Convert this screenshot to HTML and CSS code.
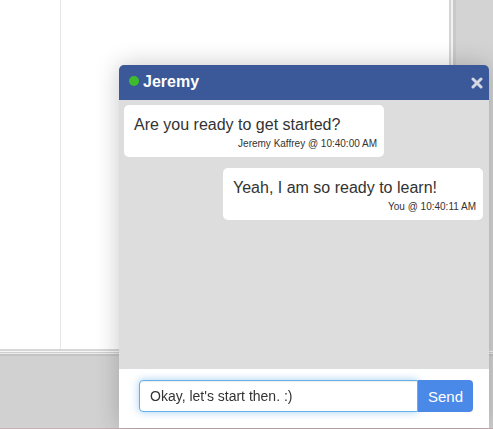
FILE: index.html
```html
<!DOCTYPE html>
<html>
<head>
<meta charset="utf-8">
<link rel="stylesheet" href="styles.css">
</head>
<body>
<div class="desk">
  <div class="top">
    <div class="side"></div>
    <div class="main"></div>
    <div class="vsep"></div>
    <div class="rail"></div>
  </div>
  <div class="hsep"></div>
  <div class="tray"></div>
</div>
<div class="chat">
  <div class="chat-head">
    <span class="dot"></span>
    <span class="name">Jeremy</span>
    <svg class="close" width="12" height="12" viewBox="0 0 12 12"><path d="M2 2 L10 10 M10 2 L2 10" stroke="#d3d8e3" stroke-width="3" stroke-linecap="round"/></svg>
  </div>
  <div class="chat-body">
    <div class="msg them">
      <div class="text">Are you ready to get started?</div>
      <div class="meta">Jeremy Kaffrey @ 10:40:00 AM</div>
    </div>
    <div class="msg me">
      <div class="text">Yeah, I am so ready to learn!</div>
      <div class="meta">You @ 10:40:11 AM</div>
    </div>
  </div>
  <div class="chat-foot">
    <div class="input-group">
      <input class="field" type="text" value="Okay, let's start then. :)">
      <button class="send">Send</button>
    </div>
  </div>
</div>
</body>
</html>
```
FILE: styles.css
```css
html, body {
  margin: 0;
  padding: 0;
  height: 429px;
  overflow: hidden;
  font-family: "Liberation Sans", Arial, Helvetica, sans-serif;
}
.desk {
  height: 429px;
  display: flex;
  flex-direction: column;
  border-bottom: 1px solid #c7b0b6;
  box-sizing: border-box;
}
.top {
  height: 349px;
  display: flex;
}
.side {
  width: 60px;
  border-right: 1px solid #e6e6e6;
  background: #fff;
}
.main {
  flex: 1;
  background: #fff;
}
.vsep {
  width: 7px;
  background: linear-gradient(to right, #d4d4d4 0, #d4d4d4 2px, #f2f2f2 2px, #f2f2f2 4px, #c9c9c9 4px, #c9c9c9 7px);
}
.rail {
  width: 37px;
  background: #d3d3d3;
}
.hsep {
  height: 7px;
  background: linear-gradient(to bottom, #d6d6d6 0, #d6d6d6 2px, #f6f6f6 2px, #f6f6f6 3px, #cfcfcf 3px, #cfcfcf 4px, #ececec 4px, #ececec 5px, #c4c4c4 5px, #c4c4c4 7px);
}
.tray {
  flex: 1;
  background: #d1d1d1;
}
.chat {
  position: fixed;
  left: 119px;
  width: 370px;
  top: 65px;
  bottom: 1px;
  display: flex;
  flex-direction: column;
  border-radius: 5px 5px 0 0;
  box-shadow: 0 0 24px rgba(0, 0, 0, 0.22);
  overflow: hidden;
}
.chat-head {
  height: 35px;
  flex: none;
  background: #3b5898;
  display: flex;
  align-items: center;
  padding: 0 6px 0 10px;
  color: #fff;
}
.dot {
  width: 10px;
  height: 10px;
  border-radius: 50%;
  background: #3dbb2d;
  margin-right: 4px;
  margin-top: -3px;
}
.name {
  font-weight: bold;
  font-size: 16px;
  flex: 1;
  margin-top: -2px;
}
.close {
  display: block;
  margin-right: 0;
}
.chat-body {
  flex: 1;
  background: #dddddd;
  padding: 5px;
  display: flex;
  flex-direction: column;
  gap: 11px;
}
.msg {
  width: 260px;
  background: #fff;
  border-radius: 5px;
  padding: 10px 7px 6px 10px;
  box-sizing: border-box;
  color: #333;
}
.msg.me {
  align-self: flex-end;
  margin-right: 1px;
}
.text {
  font-size: 16px;
  line-height: 20px;
}
.meta {
  font-size: 10px;
  line-height: 14px;
  text-align: right;
  margin-top: 2px;
}
.chat-foot {
  height: 59px;
  flex: none;
  background: #fff;
  padding: 11px 16px 0 20px;
  box-sizing: border-box;
}
.input-group {
  display: flex;
  height: 32px;
}
.field {
  flex: 1;
  min-width: 0;
  height: 32px;
  box-sizing: border-box;
  border: 1px solid #66afe9;
  border-radius: 4px 0 0 4px;
  box-shadow: inset 0 1px 1px rgba(0, 0, 0, 0.075), 0 0 8px rgba(102, 175, 233, 0.6);
  padding: 0 10px;
  font-family: "Liberation Sans", Arial, sans-serif;
  font-size: 14px;
  color: #333;
  outline: none;
  margin: 0;
}
.send {
  width: 55px;
  height: 32px;
  border: none;
  border-radius: 0 4px 4px 0;
  background: #4a89e8;
  color: #fff;
  font-family: "Liberation Sans", Arial, sans-serif;
  font-size: 15px;
  padding: 0;
  margin: 0;
}
```
